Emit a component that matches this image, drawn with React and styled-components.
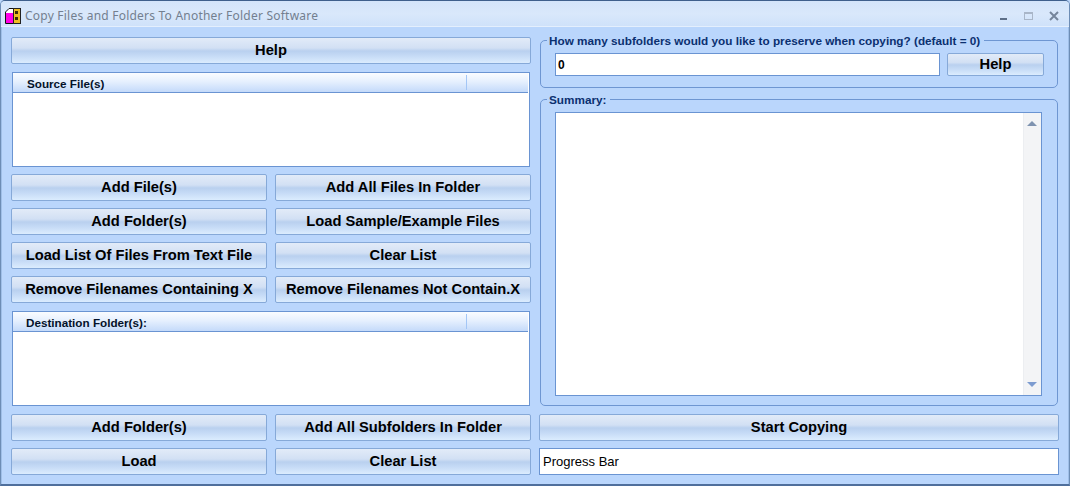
import React from 'react';
import styled, { createGlobalStyle } from 'styled-components';

const GlobalStyle = createGlobalStyle`
  html, body { margin: 0; padding: 0; background: #bcd7fb; }
  body { font-family: "Liberation Sans", Arial, sans-serif; }
`;

const Window = styled.div`
  width: 1070px;
  height: 486px;
  box-sizing: border-box;
  display: flex;
  flex-direction: column;
  overflow: hidden;
  background: #bad6fc;
  border: 1px solid #6d8db5;
  border-top-color: #3e5f8c;
  border-bottom: 2px solid #4f6f9c;
  border-radius: 5px 5px 0 0;
`;

const TitleBar = styled.div`
  height: 26px;
  flex: none;
  display: flex;
  align-items: center;
  padding: 4px 8px 0 4px;
  box-sizing: border-box;
  background: linear-gradient(#d3e4fa, #d9e8fb 50%, #cfe2fa);
  border-bottom: 1px solid #e4effd;
`;

const TitleText = styled.span`
  margin-left: 4px;
  flex: 1;
  font-family: "Noto Sans", "Open Sans", sans-serif;
  font-size: 12px;
  letter-spacing: 0.22px;
  color: #737f8f;
`;

const WinButtons = styled.div`
  display: flex;
  align-items: center;
  gap: 14px;
  margin-right: 1px;
`;

const Content = styled.div`
  flex: 1;
  display: grid;
  grid-template-columns: 520px 520px;
  column-gap: 8px;
  padding: 10px 9px 9px 9px;
  border-left: 1px solid #9fbfe8;
  border-right: 1px solid #9fbfe8;
`;

const Column = styled.div`
  display: flex;
  flex-direction: column;
`;

const Button = styled.button`
  box-sizing: border-box;
  width: 100%;
  height: 27px;
  padding: 0 0 2px;
  font-family: "Liberation Sans", Arial, sans-serif;
  font-weight: bold;
  font-size: 14.7px;
  color: #000;
  border: 1px solid #86a9d8;
  border-radius: 2px;
  background: linear-gradient(#e2ebf8 0%, #d2e0f4 40%, #b9d0ef 52%, #c6dbf6 72%, #dbecfe 100%);
`;

const ButtonGrid = styled.div`
  display: grid;
  grid-template-columns: ${p => p.$columns || '256px 256px'};
  column-gap: 8px;
  row-gap: 7px;
  margin-top: ${p => p.$top}px;
`;

const ListBox = styled.div`
  box-sizing: border-box;
  height: 95px;
  margin: 8px 1px 0 1px;
  background: #fff;
  border: 1px solid #6a94d2;
`;

const ListHeader = styled.div`
  height: 20px;
  box-sizing: border-box;
  display: flex;
  align-items: center;
  background: linear-gradient(#fafcff, #e6f0fe 45%, #c4dafa);
  border-bottom: 1px solid #6a94d2;
  margin-right: 1px;
`;

const HeaderLabel = styled.div`
  width: 454px;
  height: 15px;
  box-sizing: border-box;
  padding-left: ${p => p.$indent}px;
  font-size: 11.7px;
  font-weight: bold;
  line-height: 17px;
  color: #04122a;
  border-right: 1px solid #a3c6f6;
`;

const Group = styled.fieldset`
  box-sizing: border-box;
  height: ${p => p.$h}px;
  margin: ${p => p.$top}px 1px 0 1px;
  padding: 0 0 0 14px;
  min-width: 0;
  border: 1px solid #6e96d2;
  border-radius: 5px;
`;

const Legend = styled.legend`
  padding: 0 4px 0 2px;
  margin-left: -8px;
  font-size: 11.75px;
  font-weight: bold;
  line-height: 13px;
  color: #0b3070;
`;

const CountRow = styled.div`
  display: flex;
  gap: 7px;
  margin-top: 6px;
`;

const Field = styled.div`
  box-sizing: border-box;
  width: ${p => (p.$w ? `${p.$w}px` : '100%')};
  height: ${p => p.$h}px;
  padding-left: ${p => p.$pad}px;
  display: flex;
  align-items: center;
  background: #fff;
  border: 1px solid #6a94d2;
  font-size: ${p => p.$size}px;
  font-weight: ${p => p.$weight};
  color: #000;
`;

const SmallButton = styled(Button)`
  width: 97px;
  height: 23px;
`;

const SummaryBox = styled.div`
  box-sizing: border-box;
  width: 487px;
  height: 284px;
  margin-top: 6px;
  display: flex;
  justify-content: flex-end;
  background: #fff;
  border: 1px solid #6a94d2;
`;

const ScrollTrack = styled.div`
  width: 18px;
  display: flex;
  flex-direction: column;
  justify-content: space-between;
  align-items: center;
  padding: 8px 1px 8px 0;
  box-sizing: border-box;
  background: #f3f4f6;
  border-left: 1px solid #eceef1;
`;

const Arrow = styled.span`
  width: 0;
  height: 0;
  border-left: 5px solid transparent;
  border-right: 5px solid transparent;
  border-bottom: ${p => (p.$down ? 'none' : '5px solid #7f93b0')};
  border-top: ${p => (p.$down ? '5px solid #7d9cd0' : 'none')};
`;

const AppIcon = () => (
  <svg width="16" height="16" viewBox="0 0 16 16">
    <path d="M0.5 15.5 V4 L4 0.5 H8.5 V15.5 Z" fill="#fff" stroke="#111" />
    <rect x="1" y="5" width="7" height="10" fill="#ff00e6" />
    <rect x="8.5" y="0.5" width="7" height="15" fill="#f0bd24" stroke="#222" />
    <rect x="10" y="3" width="3" height="3" fill="#3a2c08" />
    <rect x="10" y="9" width="3" height="3" fill="#3a2c08" />
  </svg>
);

const WindowControls = () => (
  <WinButtons>
    <svg width="10" height="10" viewBox="0 0 10 10">
      <rect x="1" y="7" width="7" height="2" fill="#5d6f88" />
    </svg>
    <svg width="11" height="10" viewBox="0 0 11 10">
      <rect x="1.5" y="1.5" width="8" height="7" fill="none" stroke="#a9b6c8" />
      <rect x="1" y="1" width="9" height="2" fill="#a9b6c8" />
    </svg>
    <svg width="12" height="10" viewBox="0 0 12 10">
      <path d="M2 1 L10 9 M10 1 L2 9" stroke="#75859b" strokeWidth="2" />
    </svg>
  </WinButtons>
);

export default function App() {
  return (
    <>
      <GlobalStyle />
      <Window>
        <TitleBar>
          <AppIcon />
          <TitleText>Copy Files and Folders To Another Folder Software</TitleText>
          <WindowControls />
        </TitleBar>
        <Content>
          <Column>
            <Button>Help</Button>
            <ListBox>
              <ListHeader>
                <HeaderLabel $indent={14}>Source File(s)</HeaderLabel>
              </ListHeader>
            </ListBox>
            <ButtonGrid $top={7}>
              <Button>Add File(s)</Button>
              <Button>Add All Files In Folder</Button>
              <Button>Add Folder(s)</Button>
              <Button>Load Sample/Example Files</Button>
              <Button>Load List Of Files From Text File</Button>
              <Button>Clear List</Button>
              <Button>Remove Filenames Containing X</Button>
              <Button>Remove Filenames Not Contain.X</Button>
            </ButtonGrid>
            <ListBox>
              <ListHeader>
                <HeaderLabel $indent={13}>Destination Folder(s):</HeaderLabel>
              </ListHeader>
            </ListBox>
            <ButtonGrid $top={8}>
              <Button>Add Folder(s)</Button>
              <Button>Add All Subfolders In Folder</Button>
              <Button>Load</Button>
              <Button>Clear List</Button>
            </ButtonGrid>
          </Column>
          <Column>
            <Group $h={54} $top={-3}>
              <Legend>How many subfolders would you like to preserve when copying? (default = 0)</Legend>
              <CountRow>
                <Field $w={385} $h={23} $pad={2} $size={12} $weight="bold">0</Field>
                <SmallButton>Help</SmallButton>
              </CountRow>
            </Group>
            <Group $h={313} $top={5}>
              <Legend>Summary:</Legend>
              <SummaryBox>
                <ScrollTrack>
                  <Arrow />
                  <Arrow $down />
                </ScrollTrack>
              </SummaryBox>
            </Group>
            <ButtonGrid $top={8} $columns="520px">
              <Button>Start Copying</Button>
              <Field $h={27} $pad={3} $size={13} $weight="normal">Progress Bar</Field>
            </ButtonGrid>
          </Column>
        </Content>
      </Window>
    </>
  );
}
